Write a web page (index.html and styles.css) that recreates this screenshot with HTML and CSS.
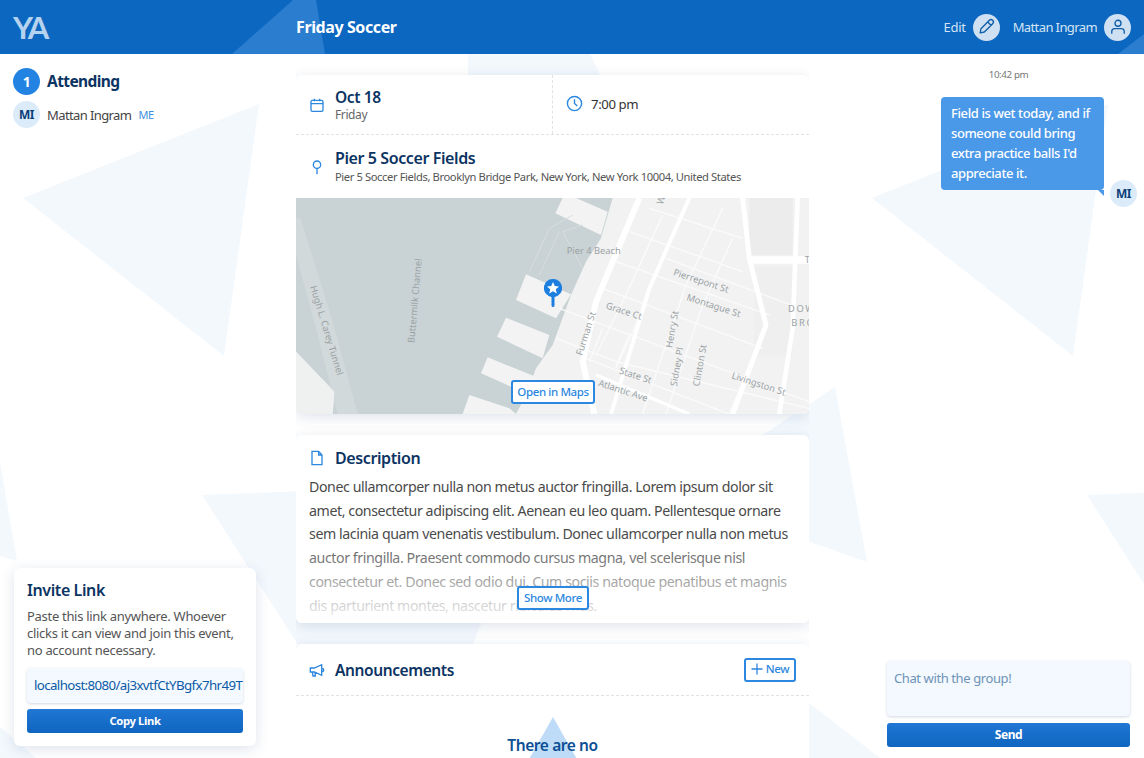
FILE: index.html
```html
<!DOCTYPE html>
<html lang="en">
<head>
  <meta charset="UTF-8" />
  <title>Friday Soccer</title>
  <link rel="stylesheet" href="styles.css">
</head>
<body>
  <svg class="bg-shapes" viewBox="0 0 1144 758">
    <polygon points="23,198 259,104 224,356"/>
    <polygon points="468,54 590,54 600,75 468,75"/>
    <polygon points="872,198 1108,104 1073,356"/>
    <polygon points="835,387 867,562 674,494"/>
    <polygon points="202,495 540,482 404,810"/>
    <polygon points="1087,495 1425,482 1289,810"/>
    <polygon points="0,462 17,561 0,556"/>
    <polygon points="0,727 36,758 0,758"/>
    <polygon points="809,703 880,758 809,758"/>
  </svg>

  <header class="topbar">
    <svg class="topbar-shapes" viewBox="0 0 1144 54">
      <polygon points="232,54 293,0 316,0 325,54"/>
      <polygon points="1118,54 1144,34 1144,54"/>
    </svg>
    <div class="logo">YA</div>
    <div class="event-title">Friday Soccer</div>
    <div class="topbar-right">
      <span>Edit</span>
      <span class="round-icon">
        <svg viewBox="0 0 24 24" width="20" height="20"><path d="M5 19l1-5L16 4c1-1 3-1 4 0s1 3 0 4L10 18z M14 6l4 4 M5 19l5-1" fill="none" stroke="#0f5ea8" stroke-width="1.6" stroke-linejoin="round"/></svg>
      </span>
      <span class="user-name">Mattan Ingram</span>
      <span class="round-icon">
        <svg viewBox="0 0 24 24" width="20" height="20"><circle cx="12" cy="7.500" r="3.600" fill="none" stroke="#0f5ea8" stroke-width="1.6"/><path d="M4.500 20v-2.500c0-2 1.500-3.500 3.500-3.500h8c2 0 3.500 1.500 3.500 3.500V20" fill="none" stroke="#0f5ea8" stroke-width="1.6"/></svg>
      </span>
    </div>
  </header>

  <main class="layout">
    <aside class="left-col">
      <div>
        <div class="attending-head">
          <span class="count">1</span>
          <h2>Attending</h2>
        </div>
        <div class="person">
          <span class="avatar">MI</span>
          <span class="person-name">Mattan Ingram</span>
          <span class="me-tag">ME</span>
        </div>
      </div>

      <section class="invite">
        <h3>Invite Link</h3>
        <p>Paste this link anywhere. Whoever clicks it can view and join this event, no account necessary.</p>
        <div class="link-box">localhost:8080/aj3xvtfCtYBgfx7hr49T</div>
        <button class="solid-btn copy-btn">Copy Link</button>
      </section>
    </aside>

    <div class="center-col">
      <section class="card">
        <div class="when">
          <div class="when-date">
            <svg class="icon" viewBox="0 0 24 24"><rect x="3" y="5" width="18" height="16.500" rx="2"/><path d="M3 10h18M8 2.500v4M16 2.500v4"/></svg>
            <div>
              <div class="big-line">Oct 18</div>
              <div class="sub-line">Friday</div>
            </div>
          </div>
          <div class="when-time">
            <svg class="icon clock" viewBox="0 0 24 24"><circle cx="12" cy="12" r="10"/><path d="M12 6V12l4 3.500"/></svg>
            <span>7:00 pm</span>
          </div>
        </div>
        <div class="where">
          <svg class="icon" viewBox="0 0 24 24"><circle cx="12" cy="8.500" r="5.500"/><path d="M12 14V23"/></svg>
          <div>
            <div class="big-line place">Pier 5 Soccer Fields</div>
            <div class="sub-line small">Pier 5 Soccer Fields, Brooklyn Bridge Park, New York, New York 10004, United States</div>
          </div>
        </div>
        <div class="map">
          <svg class="map-art" viewBox="0 9 1539 648">
            <rect x="0" y="9" width="1539" height="648" fill="#f2f2f2"/>
            <polygon class="water" points="0,9 950,9 915,130 870,200 825,300 770,450 720,520 690,600 660,657 110,657 115,590 0,470"/>
            <polygon class="tunnel" points="0,70 14,70 110,380 185,657 125,657 60,400 0,180"/>
            <polygon class="pier" points="778,55 800,9 840,9 935,50 915,120"/>
            <polygon class="pier" points="690,238 825,298 780,370 660,315"/>
            <polygon class="pier" points="630,368 760,420 740,490 603,425"/>
            <polygon class="pier" points="575,487 730,550 645,575 555,535"/>
            <polygon class="pier" points="520,600 640,640 660,657 500,657"/>
            <polygon points="0,470 115,590 110,657 0,657" fill="#eff0f0"/>
            <path class="pier-line" d="M700 230L760 100L830 60M730 240L790 110M860 220L800 110L860 90"/>
            <rect x="1360" y="9" width="130" height="170" fill="#ececec"/>
            <rect x="1375" y="215" width="115" height="270" fill="#efefef"/>
            <g class="road-thin">
              <path d="M790 340L1539 620M920 280L1400 460M960 200L1420 360M1000 110L1340 230M1060 40L1340 130"/>
              <path d="M780 430L960 500L1539 640M870 490L1300 657M1110 190L1539 350"/>
              <path d="M1100 60L990 300L900 480M1280 40L1170 270L1040 657M1310 130L1220 330L1110 657M1060 300L960 520M1380 470L1300 657"/>
              <path d="M920 400L880 500M1000 420L960 510"/>
            </g>
            <g class="road">
              <path stroke-width="18" d="M1030 9L900 320L860 500L895 657"/>
              <path stroke-width="12" d="M1180 9L1060 280L945 657"/>
              <path stroke-width="15" d="M1340 9L1360 190L1410 390L1310 657"/>
              <path stroke-width="14" d="M1505 9L1490 400L1450 657"/>
              <path stroke-width="22" d="M1360 195H1539"/>
              <path stroke-width="10" d="M900 540L1180 657"/>
            </g>
            <g class="map-label">
              <text transform="translate(812,178)">Pier 4 Beach</text>
              <text transform="translate(355,445) rotate(-85)">Buttermilk Channel</text>
              <text transform="translate(42,275) rotate(73)">Hugh L. Carey Tunnel</text>
              <text transform="translate(1130,240) rotate(18)">Pierrepont St</text>
              <text transform="translate(1170,315) rotate(18)">Montague St</text>
              <text transform="translate(928,340) rotate(18)">Grace Ct</text>
              <text transform="translate(858,483) rotate(-72)">Furman St</text>
              <text transform="translate(1128,460) rotate(-80)">Henry St</text>
              <text transform="translate(1142,575) rotate(-80)">Sidney Pl</text>
              <text transform="translate(1210,575) rotate(-80)">Clinton St</text>
              <text transform="translate(968,535) rotate(18)">State St</text>
              <text transform="translate(905,572) rotate(18)">Atlantic Ave</text>
              <text transform="translate(1305,550) rotate(18)">Livingston St</text>
              <text transform="translate(1100,30) rotate(-72)">Wa</text>
              <text transform="translate(1526,205)">T</text>
              <text class="district" transform="translate(1476,350)">DOW</text>
              <text class="district" transform="translate(1486,392)">BRO</text>
            </g>
          </svg>
          <svg class="map-pin" viewBox="0 0 18 28" width="18" height="28">
            <path d="M9 0a9 9 0 0 1 1.500 17.900V26.500a1.500 1.500 0 0 1-3 0V17.900A9 9 0 0 1 9 0z" fill="#1c7fe0"/>
            <polygon points="9,3 10.800,7 15,7.400 11.800,10.200 12.800,14.500 9,12.200 5.200,14.500 6.200,10.200 3,7.400 7.200,7" fill="#fff"/>
          </svg>
          <button class="outline-btn map-btn">Open in Maps</button>
        </div>
      </section>

      <section class="card description">
        <div class="card-title">
          <svg class="icon" viewBox="0 0 24 24"><path d="M4.500 2h10l5 5.500V22h-15zM14.500 2v5.500h5"/></svg>
          <h3>Description</h3>
        </div>
        <p class="desc-text">Donec ullamcorper nulla non metus auctor fringilla. Lorem ipsum dolor sit amet, consectetur adipiscing elit. Aenean eu leo quam. Pellentesque ornare sem lacinia quam venenatis vestibulum. Donec ullamcorper nulla non metus auctor fringilla. Praesent commodo cursus magna, vel scelerisque nisl consectetur et. Donec sed odio dui. Cum sociis natoque penatibus et magnis dis parturient montes, nascetur ridiculus mus.</p>
        <div class="desc-fade"></div>
        <button class="outline-btn more-btn">Show More</button>
      </section>

      <section class="card announcements">
        <div class="ann-head">
          <svg class="icon" viewBox="0 0 24 24"><path d="M2 9h6l11-5v16L8 15H2zM5 15l1 6h3.500L9 15.500M19 9.500c2 0 3 1 3 2.500s-1 2.500-3 2.500"/></svg>
          <h3>Announcements</h3>
          <button class="outline-btn new-btn">
            <svg viewBox="0 0 12 12" width="12" height="12"><path d="M6 .5v11M.5 6h11" fill="none" stroke="#2c87e0" stroke-width="1.300"/></svg>
            New
          </button>
        </div>
        <div class="empty">
          <svg class="empty-shape" viewBox="0 0 50 44" width="50" height="44"><polygon points="25,0 50,44 0,44" fill="#bedcf7"/></svg>
          <div class="empty-text">There are no</div>
        </div>
      </section>
    </div>

    <aside class="right-col">
      <div class="chat-log">
        <div class="chat-time">10:42 pm</div>
        <div class="message">
          <div class="bubble">Field is wet today, and if someone could bring extra practice balls I'd appreciate it.</div>
          <span class="avatar">MI</span>
        </div>
      </div>
      <div class="chat-form">
        <div class="chat-input">Chat with the group!</div>
        <button class="solid-btn">Send</button>
      </div>
    </aside>
  </main>
</body>
</html>
```

FILE: styles.css
```css
* {
  box-sizing: border-box;
}

html, body {
  height: 100%;
}

body {
  font-family: 'Noto Sans', 'Open Sans', sans-serif;
  letter-spacing: -0.4px;
  background: #fff;
  color: #444;
  margin: 0;
  overflow: hidden;
  position: relative;
}

h2, h3, p {
  margin: 0;
}

button {
  font-family: inherit;
  letter-spacing: inherit;
  cursor: pointer;
}

.bg-shapes {
  position: absolute;
  top: 0;
  left: 0;
  width: 1144px;
  height: 758px;
  fill: #f3f8fd;
}

/* header */
.topbar {
  position: relative;
  display: flex;
  align-items: center;
  height: 54px;
  padding-right: 13px;
  background: #0b67bf;
  color: #fff;
}

.topbar-shapes {
  position: absolute;
  top: 0;
  left: 0;
  width: 1144px;
  height: 54px;
  fill: #2b7dd0;
}

.logo {
  position: relative;
  width: 296px;
  padding-left: 13px;
  font-family: 'Lato', sans-serif;
  font-size: 31px;
  font-weight: 700;
  letter-spacing: -3px;
  color: #b5d2ef;
}

.event-title {
  position: relative;
  font-size: 16px;
  font-weight: 700;
}

.topbar-right {
  position: relative;
  display: flex;
  align-items: center;
  margin-left: auto;
  font-size: 13px;
  letter-spacing: -0.3px;
  color: #d5e5f5;
}

.round-icon {
  display: flex;
  align-items: center;
  justify-content: center;
  width: 27px;
  height: 27px;
  margin-left: 7px;
  border-radius: 50%;
  background: #cfe0f2;
}

.user-name {
  margin-left: 13px;
  letter-spacing: -0.6px;
}

/* columns */
.layout {
  position: relative;
  display: grid;
  grid-template-columns: 296px 513px 335px;
  height: 704px;
}

.left-col {
  display: flex;
  flex-direction: column;
  justify-content: space-between;
  padding: 14px 40px 12px 14px;
}

.attending-head {
  display: flex;
  align-items: center;
  margin-left: -1px;
}

.count {
  display: flex;
  align-items: center;
  justify-content: center;
  width: 27px;
  height: 27px;
  border-radius: 50%;
  background: #2383e2;
  color: #fff;
  font-size: 14px;
  font-weight: 700;
}

.attending-head h2 {
  margin: -2px 0 0 7px;
  font-size: 15.500px;
  font-weight: 700;
  letter-spacing: -0.6px;
  color: #0c3463;
}

.person {
  display: flex;
  align-items: center;
  margin: 6px 0 0 -1px;
  font-size: 13px;
  letter-spacing: -0.6px;
}

.avatar {
  display: flex;
  flex: none;
  align-items: center;
  justify-content: center;
  width: 27px;
  height: 27px;
  border-radius: 50%;
  background: #dcebf9;
  color: #0c3f78;
  font-size: 12px;
  font-weight: 700;
}

.person-name {
  margin-left: 7px;
}

.me-tag {
  margin-left: 7px;
  font-size: 11px;
  letter-spacing: -0.3px;
  color: #3d8fe0;
}

.card {
  position: relative;
  background: #fff;
  border-radius: 6px;
  box-shadow: 0 3px 14px rgba(20, 60, 110, 0.14);
  overflow: hidden;
}

.invite {
  padding: 12px 13px 13px;
  background: #fff;
  border-radius: 6px;
  box-shadow: 0 3px 14px rgba(20, 60, 110, 0.14);
}

.invite h3 {
  font-size: 16px;
  font-weight: 600;
  line-height: 20px;
  color: #0c3463;
}

.invite p {
  margin-top: 8px;
  font-size: 13px;
  line-height: 17px;
  letter-spacing: -0.3px;
  color: #555;
}

.link-box {
  height: 35px;
  margin-top: 9px;
  padding: 8px 7px;
  overflow: hidden;
  white-space: nowrap;
  font-size: 13.300px;
  letter-spacing: -0.62px;
  color: #0c5aa6;
  background: #f3f9fe;
  border-radius: 4px;
  box-shadow: 0 1px 3px rgba(20, 60, 110, 0.2);
}

.solid-btn {
  display: block;
  width: 100%;
  height: 24px;
  margin-top: 6px;
  padding: 0 0 1px;
  border: 0;
  border-radius: 3px;
  background: linear-gradient(#2077d4, #0f66c0);
  color: #fff;
  font-size: 12px;
  font-weight: 700;
}

.copy-btn {
  font-size: 11.300px;
}

/* center */
.center-col {
  display: flex;
  flex-direction: column;
  gap: 21px;
  padding-top: 21px;
  overflow: hidden;
}

.center-col .card {
  flex: none;
}

.icon {
  flex: none;
  width: 16px;
  height: 16px;
  fill: none;
  stroke: #2c87e0;
  stroke-width: 2;
}

.icon.clock {
  width: 17px;
  height: 17px;
}

.when {
  display: flex;
  height: 60px;
  border-bottom: 1px dashed #e2e2e2;
}

.when-date {
  display: flex;
  flex: 0 0 257px;
  align-items: center;
  gap: 10px;
  padding-left: 13px;
  border-right: 1px dashed #e2e2e2;
}

.when-time {
  display: flex;
  align-items: center;
  gap: 8px;
  padding: 0 0 2px 13px;
  font-size: 13.200px;
  color: #333;
}

.big-line {
  font-size: 15.500px;
  font-weight: 600;
  line-height: 20px;
  color: #0c3463;
}

.big-line.place {
  margin-bottom: 2px;
  font-size: 16px;
  line-height: 18px;
}

.sub-line {
  font-size: 12px;
  line-height: 15px;
  color: #666;
}

.sub-line.small {
  font-size: 11.200px;
  color: #555;
}

.where {
  display: flex;
  align-items: center;
  gap: 10px;
  height: 63px;
  padding-left: 13px;
}

.map {
  position: relative;
  height: 216px;
}

.map-art {
  display: block;
  width: 513px;
  height: 216px;
}

.water { fill: #c9d2d4; }
.tunnel { fill: #d2d9da; }
.pier { fill: #f3f3f3; }
.pier-line { fill: none; stroke: #d8dddd; stroke-width: 3; }
.road { fill: none; stroke: #fff; }
.road-thin { fill: none; stroke: #fbfbfb; stroke-width: 4; }

.map-label text {
  font-family: 'Noto Sans', sans-serif;
  font-size: 28px;
  letter-spacing: 0;
  fill: #9aa2a5;
}

.map-label .district {
  letter-spacing: 5px;
}

.map-pin {
  position: absolute;
  left: 248px;
  top: 81px;
}

.outline-btn {
  padding: 0 0 2px;
  border: 2px solid #2c87e0;
  border-radius: 3px;
  background: #fff;
  color: #2c87e0;
  font-size: 11.500px;
  font-weight: 500;
}

.map-btn {
  position: absolute;
  left: 215px;
  top: 182px;
  width: 84px;
  height: 24px;
}

.description {
  height: 188px;
  padding: 11px 13px 0;
}

.card-title {
  display: flex;
  align-items: center;
  gap: 10px;
  height: 24px;
}

.card-title h3 {
  font-size: 16px;
  font-weight: 600;
  color: #0c3463;
}

.ann-head h3 {
  font-size: 15.500px;
  font-weight: 600;
  color: #0c3463;
}

.desc-text {
  margin-top: 5px;
  font-size: 14.200px;
  line-height: 23.700px;
  letter-spacing: -0.42px;
  color: #4a4a4a;
}

.desc-fade {
  position: absolute;
  left: 0;
  right: 0;
  bottom: 0;
  height: 88px;
  background: linear-gradient(rgba(255, 255, 255, 0), rgba(255, 255, 255, 0.95));
}

.more-btn {
  position: absolute;
  left: 221px;
  top: 151px;
  width: 72px;
  height: 24px;
}

.announcements {
  height: 200px;
}

.ann-head {
  display: flex;
  align-items: center;
  gap: 10px;
  height: 52px;
  padding: 0 13px;
  border-bottom: 1px dashed #e2e2e2;
}

.new-btn {
  display: flex;
  align-items: center;
  justify-content: center;
  gap: 3px;
  width: 52px;
  height: 24px;
  margin-left: auto;
}

.empty {
  position: relative;
  padding-top: 38px;
  text-align: center;
}

.empty-shape {
  position: absolute;
  left: 232px;
  top: 21px;
}

.empty-text {
  position: relative;
  font-size: 15.500px;
  font-weight: 600;
  color: #0c4f94;
}

/* chat */
.right-col {
  display: flex;
  flex-direction: column;
  justify-content: space-between;
  padding: 14px 14px 11px 78px;
}

.chat-time {
  text-align: center;
  font-size: 9.800px;
  color: #777;
}

.message {
  display: flex;
  align-items: flex-end;
  margin: 16px -7px 0 54px;
}

.bubble {
  position: relative;
  width: 163px;
  padding: 6px 10px 7px;
  border-radius: 4px;
  background: #4a98e8;
  color: #fff;
  font-size: 13px;
  font-weight: 500;
  line-height: 20px;
  margin-bottom: 17px;
}

.bubble::after {
  content: "";
  position: absolute;
  right: 0;
  bottom: -6px;
  border-top: 6px solid #4a98e8;
  border-left: 6px solid transparent;
}

.message .avatar {
  margin-left: 6px;
}

.chat-input {
  height: 55px;
  padding: 8px 7px;
  font-size: 13px;
  color: #6f93b8;
  background: #f3f9fe;
  border-radius: 4px;
  box-shadow: 0 1px 3px rgba(20, 60, 110, 0.2);
}

.chat-form .solid-btn {
  margin-top: 7px;
}
```
